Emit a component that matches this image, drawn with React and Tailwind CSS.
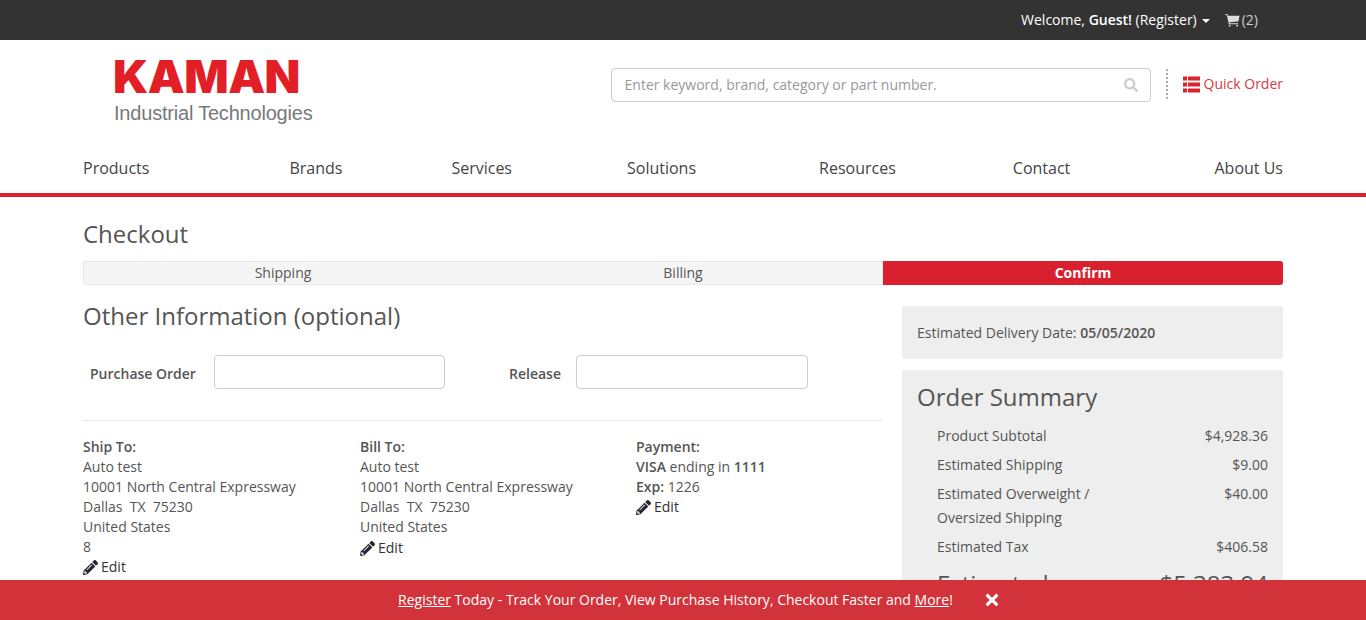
import React from 'react'
import { FaSearch, FaPencilAlt, FaTimes } from 'react-icons/fa'

const navItems = [
  { label: 'Products', cls: '' },
  { label: 'Brands', cls: 'ml-[140px]' },
  { label: 'Services', cls: 'ml-[109px]' },
  { label: 'Solutions', cls: 'ml-[115px]' },
  { label: 'Resources', cls: 'ml-[123px]' },
  { label: 'Contact', cls: 'ml-[117px]' },
  { label: 'About Us', cls: 'ml-auto' },
]

function EditLink() {
  return (
    <div className="flex items-center text-[#333]">
      <FaPencilAlt className="w-[15px] h-[15px] mr-[3px] text-[#2b2433]" />
      <span>Edit</span>
    </div>
  )
}

function SummaryRow({ label, value }) {
  return (
    <div className="flex justify-between pl-5 mb-[5px]">
      <span className="w-[170px] leading-6">{label}</span>
      <span className="leading-6">{value}</span>
    </div>
  )
}

function CartIcon() {
  return (
    <svg viewBox="0 0 16 14" className="w-[15px] h-[14px] mr-[2px] text-[#ddd]" fill="currentColor">
      <path d="M0 0.5h2.6l0.5 2h12.4l-1.2 6-9.6 0.8 0.3 1.2h9v1H4.1L1.8 1.5H0z" />
      <circle cx="5" cy="13" r="1" />
      <circle cx="13" cy="13" r="1" />
    </svg>
  )
}

function QuickOrderIcon() {
  return (
    <svg viewBox="0 0 17 17" className="w-[17px] h-[17px] mr-1" fill="currentColor">
      <rect x="0" y="0.5" width="4" height="4" />
      <rect x="5" y="0.5" width="12" height="4" />
      <rect x="0" y="6.5" width="4" height="4" />
      <rect x="5" y="6.5" width="12" height="4" />
      <rect x="0" y="12.5" width="4" height="4" />
      <rect x="5" y="12.5" width="12" height="4" />
    </svg>
  )
}

export default function App() {
  return (
    <div className="h-screen overflow-hidden bg-white text-[14px] leading-5 text-[#555] font-['Open_Sans',sans-serif]">
      {/* Top bar */}
      <div className="h-10 bg-[#333] text-white">
        <div className="mx-auto w-[1200px] h-full flex items-center justify-end pr-[25px]">
          <span>Welcome, <b className="font-semibold">Guest!</b> (Register)</span>
          <span className="w-0 h-0 ml-[5px] mr-[15px] mt-[2px] border-x-4 border-t-4 border-x-transparent border-t-white" />
          <CartIcon />
          <span className="text-[#ccc]">(2)</span>
        </div>
      </div>

      {/* Logo and search */}
      <div className="mx-auto w-[1200px] h-[113px] flex justify-between">
        <div className="pl-[30px] pt-[17px]">
          <div className="text-[#e21e26] text-[45px] leading-[40px] font-black font-['Inter',sans-serif] tracking-[-0.5px] origin-left scale-x-[1.033]">KAMAN</div>
          <div className="text-[#77787b] text-[20px] leading-6 mt-[4px] ml-px tracking-[-0.2px] font-['Liberation_Sans',sans-serif]">Industrial Technologies</div>
        </div>
        <div className="flex items-start pt-7">
          <div className="w-[540px] h-[34px] border border-[#ccc] rounded flex items-center justify-between pl-[12px] pr-3 text-[#999]">
            <span className="ml-px">Enter keyword, brand, category or part number.</span>
            <FaSearch className="w-[14px] h-[14px] text-[#ccc]" />
          </div>
          <div className="h-[30px] ml-[15px] mr-[15px] mt-px border-l-2 border-dotted border-[#aaa]" />
          <div className="flex items-center h-[32px] text-[#d63a42]">
            <span className="text-[#d9232e]"><QuickOrderIcon /></span>
            <span>Quick Order</span>
          </div>
        </div>
      </div>

      {/* Main nav */}
      <nav className="border-b-4 border-[#d9202e] h-[44px]">
        <div className="mx-auto w-[1200px] flex text-[16px] leading-[30px] text-[#444]">
          {navItems.map((item) => (
            <span key={item.label} className={item.cls}>{item.label}</span>
          ))}
        </div>
      </nav>

      <div className="mx-auto w-[1200px]">
        <h1 className="text-[24px] leading-[26px] mt-6 mb-[14px] text-[#555]">Checkout</h1>

        {/* Steps */}
        <div className="grid grid-cols-3 h-6 leading-6 text-center">
          <div className="col-span-2 grid grid-cols-2 bg-[#f5f5f5] shadow-[inset_0_0_0_1px_#e7e7e7] rounded-l-[3px]">
            <div>Shipping</div>
            <div>Billing</div>
          </div>
          <div className="bg-[#d9202f] text-white font-bold rounded-r-[3px]">Confirm</div>
        </div>

        <div className="flex justify-between">
          {/* Left column */}
          <div className="w-[800px]">
            <h2 className="text-[24px] leading-[26px] mt-[18px] text-[#555]">Other Information (optional)</h2>
            <div className="flex items-center mt-[26px] pb-[31px] border-b border-[#e7e7e7]">
              <label className="font-semibold mt-1 ml-[7px] w-[124px]">Purchase Order</label>
              <div className="w-[231px] h-[34px] border border-[#ccc] rounded" />
              <label className="font-semibold mt-1 ml-[64px] w-[67px]">Release</label>
              <div className="w-[232px] h-[34px] border border-[#ccc] rounded" />
            </div>
            <div className="grid grid-cols-[277px_276px_1fr] pt-4">
              <div>
                <b className="font-semibold">Ship To:</b>
                <div>Auto test</div>
                <div>10001 North Central Expressway</div>
                <div className="whitespace-pre">Dallas  TX  75230</div>
                <div>United States</div>
                <div>8</div>
                <EditLink />
              </div>
              <div>
                <b className="font-semibold">Bill To:</b>
                <div>Auto test</div>
                <div>10001 North Central Expressway</div>
                <div className="whitespace-pre">Dallas  TX  75230</div>
                <div>United States</div>
                <div className="mt-[1px]"><EditLink /></div>
              </div>
              <div>
                <b className="font-semibold">Payment:</b>
                <div><b className="font-semibold">VISA</b> ending in <b className="font-semibold">1111</b></div>
                <div><b className="font-semibold">Exp:</b> 1226</div>
                <EditLink />
              </div>
            </div>
          </div>

          {/* Right column */}
          <div className="w-[381px] pt-[21px]">
            <div className="h-[53px] bg-[#eee] rounded-[3px] px-[15px] flex items-center">
              <span>Estimated Delivery Date: <b className="font-semibold">05/05/2020</b></span>
            </div>
            <div className="mt-[11px] bg-[#eee] rounded-[3px] px-[15px] pt-[13px] h-[300px]">
              <h2 className="text-[24px] leading-[28px] mb-[13px]">Order Summary</h2>
              <SummaryRow label="Product Subtotal" value="$4,928.36" />
              <SummaryRow label="Estimated Shipping" value="$9.00" />
              <SummaryRow label="Estimated Overweight / Oversized Shipping" value="$40.00" />
              <SummaryRow label="Estimated Tax" value="$406.58" />
              <div className="flex justify-between pl-5 mt-[11px] text-[24px] leading-7">
                <span>Estimated</span>
                <span>$5,383.94</span>
              </div>
            </div>
          </div>
        </div>
      </div>

      {/* Register banner */}
      <div className="fixed left-0 right-0 bottom-0 h-10 bg-[#d2323a] text-white flex items-center justify-center pl-[33px]">
        <span><u>Register</u> Today - Track Your Order, View Purchase History, Checkout Faster and <u>More</u>!</span>
        <FaTimes className="w-[18px] h-[18px] ml-[30px]" />
      </div>
    </div>
  )
}
